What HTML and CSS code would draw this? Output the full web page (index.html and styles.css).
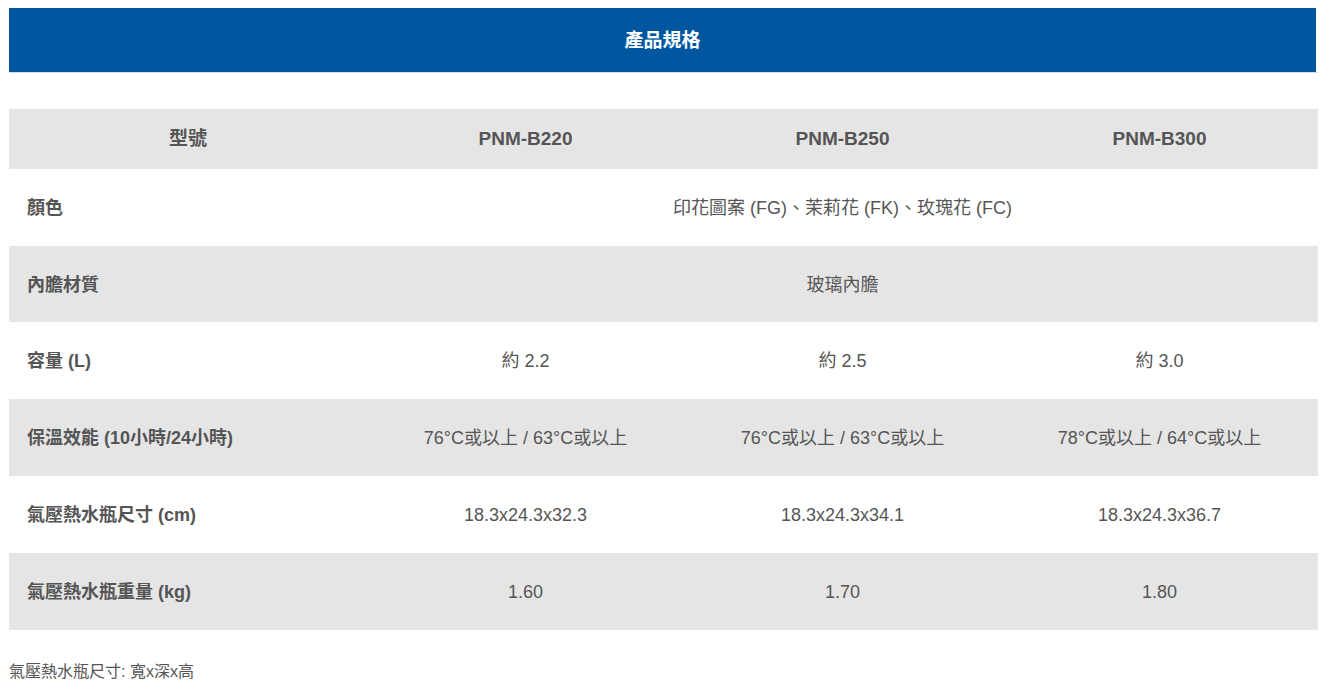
FILE: index.html
```html
<!DOCTYPE html>
<html lang="zh-Hant">
<head>
<meta charset="utf-8">
<title>產品規格</title>
<link rel="stylesheet" href="styles.css">
</head>
<body>
<div class="page">
  <div class="title-wrap">
    <div class="title">產品規格</div>
  </div>
  <table class="spec">
    <colgroup>
      <col class="c-label">
      <col class="c-val">
      <col class="c-val">
      <col class="c-val">
    </colgroup>
    <thead>
      <tr class="head">
        <th>型號</th>
        <th>PNM-B220</th>
        <th>PNM-B250</th>
        <th>PNM-B300</th>
      </tr>
    </thead>
    <tbody>
      <tr>
        <td class="label">顏色</td>
        <td colspan="3">印花圖案 (FG)、茉莉花 (FK)、玫瑰花 (FC)</td>
      </tr>
      <tr class="alt short">
        <td class="label">內膽材質</td>
        <td colspan="3">玻璃內膽</td>
      </tr>
      <tr>
        <td class="label">容量 (L)</td>
        <td>約 2.2</td>
        <td>約 2.5</td>
        <td>約 3.0</td>
      </tr>
      <tr class="alt">
        <td class="label">保溫效能 (10小時/24小時)</td>
        <td>76°C或以上 / 63°C或以上</td>
        <td>76°C或以上 / 63°C或以上</td>
        <td>78°C或以上 / 64°C或以上</td>
      </tr>
      <tr>
        <td class="label">氣壓熱水瓶尺寸 (cm)</td>
        <td>18.3x24.3x32.3</td>
        <td>18.3x24.3x34.1</td>
        <td>18.3x24.3x36.7</td>
      </tr>
      <tr class="alt">
        <td class="label">氣壓熱水瓶重量 (kg)</td>
        <td>1.60</td>
        <td>1.70</td>
        <td>1.80</td>
      </tr>
    </tbody>
  </table>
  <p class="note">氣壓熱水瓶尺寸: 寬x深x高</p>
</div>
</body>
</html>
```

FILE: styles.css
```css
html, body {
  margin: 0;
  padding: 0;
  background: #ffffff;
}

body {
  font-family: "Liberation Sans", "Noto Sans CJK TC", sans-serif;
  color: #555555;
}

.page {
  padding: 8px 14px 0 9px;
}

.title-wrap {
  border-bottom: 1px solid #dcdcdc;
}

.title {
  width: 1307px;
  height: 60px;
  padding-bottom: 4px;
  background: #0057a0;
  color: #ffffff;
  font-size: 19px;
  font-weight: bold;
  display: flex;
  align-items: center;
  justify-content: center;
}

.spec {
  margin-top: 36px;
  width: 1309px;
  border-collapse: collapse;
  table-layout: fixed;
}

.c-label {
  width: 358px;
}

.c-val {
  width: 317px;
}

.spec th {
  padding: 16px 0 16px;
  line-height: 28px;
  font-size: 19px;
  font-weight: bold;
  text-align: center;
  vertical-align: middle;
  background: #e5e5e5;
}

.spec td {
  padding: 26px 0 24px;
  line-height: 27px;
  font-size: 18px;
  text-align: center;
  vertical-align: middle;
}

.spec tr.short td {
  padding-bottom: 23px;
}

.spec td.label {
  text-align: left;
  padding-left: 18px;
  font-weight: bold;
}

.spec tr.alt td {
  background: #e5e5e5;
}

.note {
  margin: 30px 0 0 0;
  font-size: 16px;
  line-height: 24px;
}
```
